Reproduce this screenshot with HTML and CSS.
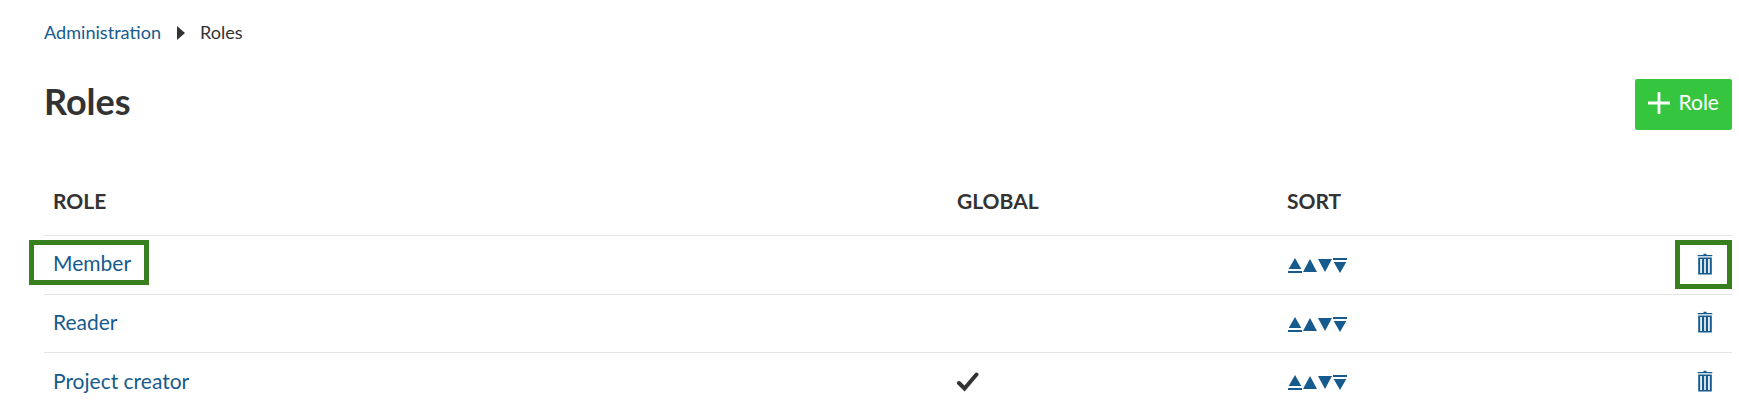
FILE: index.html
```html
<!DOCTYPE html>
<html lang="en">
<head>
<meta charset="utf-8">
<title>Roles</title>
<link rel="stylesheet" href="styles.css">
</head>
<body>
<svg class="sprite" aria-hidden="true">
  <symbol id="sort" viewBox="0 0 60 16">
    <path d="M7 0L13.300 11H.7ZM0 13h14v2H0ZM22 1L29 14H15ZM30 1h14L37 14ZM45 0h14v2H45ZM45.700 4h12.600L52 15Z"/>
  </symbol>
  <symbol id="trash" viewBox="0 0 16 22">
    <path fill-rule="evenodd" d="M6.500 0.700h3V2H15.300V3.200H.7V2H6.500ZM1.200 4.500h13.600v17H1.200ZM3.200 6v14h1.700V6ZM7.200 6v14h1.600V6ZM11.100 6v14h1.700V6Z"/>
  </symbol>
</svg>
<nav class="breadcrumb">
  <a class="link" href="#">Administration</a>
  <svg class="arrow" viewBox="0 0 8 14"><path d="M0 0L8 7L0 14Z"/></svg>
  <span>Roles</span>
</nav>
<header class="toolbar">
  <h1 class="title">Roles</h1>
  <button class="add"><svg class="plus" viewBox="0 0 22 22"><path d="M11 0V22M0 11H22"/></svg><span class="label">Role</span></button>
</header>
<main class="table">
  <div class="row head"><span>ROLE</span><span>GLOBAL</span><span>SORT</span></div>
  <div class="row"><a class="link name marked" href="#">Member</a><span></span><svg class="sort"><use href="#sort"/></svg><span class="delete marked-icon"><svg class="trash"><use href="#trash"/></svg></span></div>
  <div class="row short"><a class="link name" href="#">Reader</a><span></span><svg class="sort"><use href="#sort"/></svg><span class="delete"><svg class="trash"><use href="#trash"/></svg></span></div>
  <div class="row last"><a class="link name" href="#">Project creator</a><svg class="check" viewBox="0 0 22 20"><path d="M2 11L7.500 16.500L19.500 2.500"/></svg><svg class="sort"><use href="#sort"/></svg><span class="delete"><svg class="trash"><use href="#trash"/></svg></span></div>
</main>
</body>
</html>
```
FILE: styles.css
```css
*, *::after { box-sizing: border-box; }
body { margin: 0; padding: 19px 7px 0 44px; height: 419px; overflow: hidden; background: #fff; color: #333; font-family: Lato, sans-serif; font-size: 21px; }
.sprite { position: absolute; width: 0; height: 0; }
.link { color: #175a8e; text-decoration: none; }
.breadcrumb { display: flex; align-items: center; height: 26px; font-size: 18.1px; }
.arrow { width: 8px; height: 14px; margin: 2px 15px 0 16px; fill: #333; }
.toolbar { display: flex; justify-content: space-between; align-items: flex-start; height: 123px; padding-top: 34px; }
.title { margin: -1px 0 0; font-size: 36px; line-height: 46px; font-weight: 700; }
.add { display: flex; align-items: center; gap: 9px; width: 97px; height: 51px; padding: 0 0 3px 12.500px; border: 0; border-radius: 2px; background: #35c53f; color: #fff; font: inherit; }
.plus { width: 22px; height: 22px; fill: none; stroke: #fff; stroke-width: 2.8; }
.label { padding-bottom: 3px; }
.row { display: grid; grid-template-columns: 904px 330px 1fr 45px; align-items: center; height: 59px; padding-left: 9px; border-bottom: 1px solid #e4e4e4; }
.row > * { justify-self: start; }
.head { height: 68px; padding-bottom: 2px; font-weight: 700; }
.short { height: 58px; }
.last { height: 58px; border: 0; }
.name { padding-bottom: 5px; }
.sort { width: 60px; height: 16px; margin: 2px 0 0 1px; fill: #175a8e; }
.delete { display: flex; padding: 0 0 3px 10px; }
.trash { width: 16px; height: 22px; fill: #175a8e; }
.last .name { padding-bottom: 4px; }
.check { width: 22px; height: 20px; fill: none; stroke: #333; stroke-width: 4; stroke-linecap: round; }
.marked, .marked-icon { position: relative; }
.marked::after { content: ""; position: absolute; left: -24px; top: -10px; width: 120px; height: 45px; border: 5px solid #38801f; }
.marked-icon::after { content: ""; position: absolute; left: -12px; top: -13px; width: 57px; height: 49px; border: 5px solid #38801f; }
```
